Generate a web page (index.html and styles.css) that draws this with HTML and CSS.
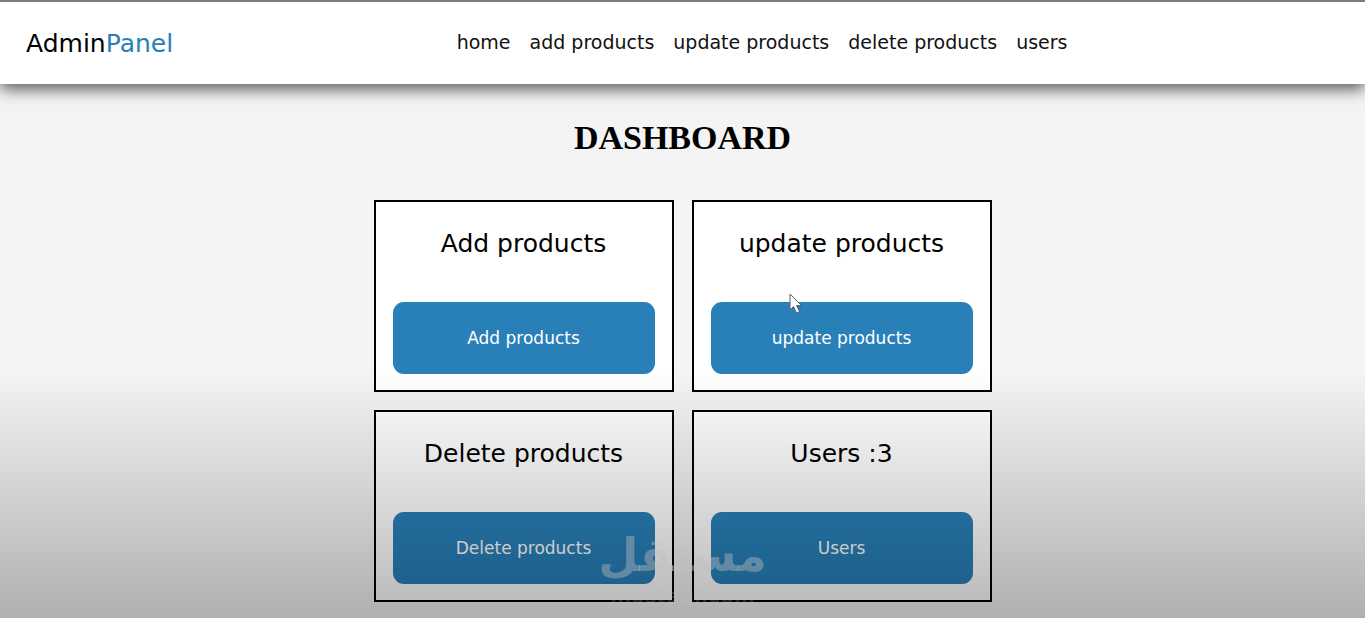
FILE: index.html
```html
<!DOCTYPE html>
<html lang="en">
<head>
  <meta charset="UTF-8">
  <meta name="viewport" content="width=device-width, initial-scale=1.0">
  <title>Dashboard</title>
  <link rel="stylesheet" href="styles.css">
</head>
<body>

  <header class="header">
    <a href="#" class="logo">Admin<span>Panel</span></a>
    <nav class="navbar">
      <a href="#">home</a>
      <a href="#">add products</a>
      <a href="#">update products</a>
      <a href="#">delete products</a>
      <a href="#">users</a>
    </nav>
    <div class="icons"></div>
  </header>

  <main class="dashboard">
    <h1 class="heading">DASHBOARD</h1>

    <div class="box-container">
      <div class="box">
        <h3>Add products</h3>
        <a href="#" class="btn">Add products</a>
      </div>
      <div class="box">
        <h3>update products</h3>
        <a href="#" class="btn">update products</a>
        <svg class="cursor" width="14" height="22" viewBox="0 0 14 22">
          <path d="M1 1v16l3.500-3.500 3 6.500 3-1.500-3-6h5z" fill="#fff" stroke="#55606b" stroke-width="1"/>
        </svg>
      </div>
      <div class="box">
        <h3>Delete products</h3>
        <a href="#" class="btn">Delete products</a>
      </div>
      <div class="box">
        <h3>Users :3</h3>
        <a href="#" class="btn">Users</a>
      </div>
    </div>
  </main>

  <div class="shade"></div>
  <div class="watermark">
    <span class="mark-ar" lang="ar" dir="rtl">مستقل</span>
    <span class="mark-en">mostaql.com</span>
  </div>

</body>
</html>
```
FILE: styles.css
```css
* {
  margin: 0; padding: 0;
  box-sizing: border-box;
  text-decoration: none;
}

body {
  font-family: Verdana, "DejaVu Sans", sans-serif;
  background-color: #f4f4f4;
  color: #000;
  min-height: 100vh;
}

/* header */
.header {
  position: relative;
  display: flex;
  align-items: center;
  justify-content: space-between;
  height: 84px;
  padding: 0 26px;
  background-color: #fff;
  border-top: 2px solid #7c7f82;
  box-shadow: 0 5px 15px rgba(0, 0, 0, .65);
}
.logo { font-size: 25px; color: #000; }
.logo span { color: #2980b9; }
.navbar { display: flex; gap: 19px; padding-left: 12px; padding-bottom: 2px; }
.navbar a { font-size: 19px; color: #111; }

/* dashboard */
.dashboard { padding: 34px 20px 16px; }
.heading {
  font-family: "Times New Roman", "Liberation Serif", serif;
  font-size: 34px;
  line-height: 40px;
  text-align: center;
  margin-bottom: 42px;
}
.box-container {
  display: grid;
  grid-template-columns: repeat(auto-fit, 300px);
  gap: 18px;
  justify-content: center;
  max-width: 618px;
  margin: 0 auto;
}
.box {
  position: relative;
  padding: 17px;
  background-color: #fff;
  border: 2px solid #000;
  text-align: center;
}
.box h3 {
  font-size: 25px;
  font-weight: normal;
  line-height: 50px;
  margin-bottom: 33px;
}
.btn {
  display: block;
  padding: 20px;
  font-size: 17px;
  line-height: 32px;
  color: #fff;
  background-color: #2980b9;
  border-radius: 11px;
}
.box h3 + .btn { margin-bottom: -1px; }
.cursor { position: absolute; left: 95px; top: 91px; }

/* overlays */
.shade {
  position: fixed;
  left: 0; right: 0; bottom: 0;
  height: 40vh;
  background: linear-gradient(rgba(0, 0, 0, 0), rgba(0, 0, 0, .28));
  pointer-events: none;
}
.watermark {
  position: fixed;
  left: 0; right: 0; bottom: 12px;
  display: flex;
  flex-direction: column;
  align-items: center;
  gap: 6px;
  color: rgba(190, 190, 190, .42);
  pointer-events: none;
}
.mark-ar {
  font-family: "DejaVu Sans", sans-serif;
  font-size: 46px;
  font-weight: bold;
  line-height: 50px;
}
.mark-en {
  font-size: 20px;
  font-weight: bold;
  line-height: 20px;
  color: rgba(190, 190, 190, .2);
}
```
